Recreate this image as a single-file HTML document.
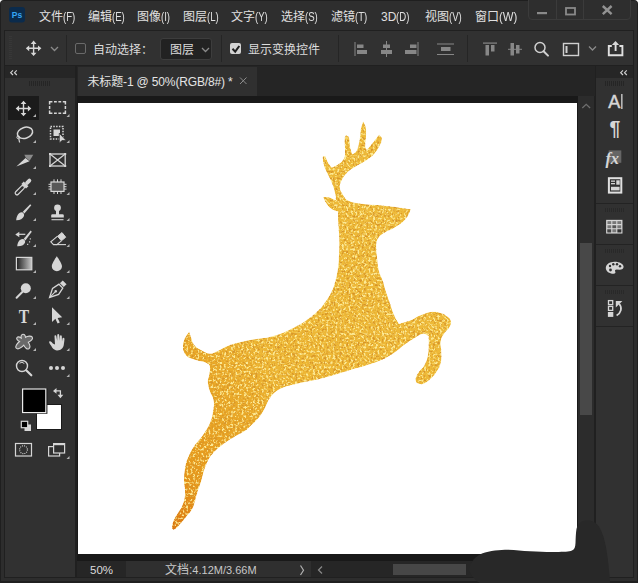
<!DOCTYPE html>
<html lang="zh-CN">
<head>
<meta charset="utf-8">
<title>Photoshop</title>
<style>
*{box-sizing:border-box;margin:0;padding:0}
html,body{width:638px;height:583px;overflow:hidden;background:#fff}
#win{left:0;top:0;width:638px;height:583px;background:#2d2d2d;border:1px solid #1f1f1f;border-bottom-width:2px;border-radius:4px 4px 0 0}
body{position:relative;font-family:"Liberation Sans","Noto Sans CJK SC",sans-serif;font-size:12px;color:#d8d8d8}
.abs{position:absolute}
#menubar{left:1px;top:1px;width:636px;height:29px;background:#2e2e2e;border-radius:3px 3px 0 0}
#frame{left:4px;top:30px;width:630px;height:548px;background:#202020}
.mi .l{display:inline-block;font-size:12px;transform:scaleX(.8);transform-origin:0 50%}
.mi{position:absolute;top:9px;height:17px;line-height:17px;font-size:12px;color:#e0e0e0;white-space:nowrap}
#optbar{left:5px;top:31px;width:628px;height:34px;background:#313131}
.vsep{position:absolute;width:1px;background:#252525;top:35px;height:27px}
.t12{position:absolute;font-size:12px;line-height:16px;color:#dcdcdc;white-space:nowrap}
#toolhdr{left:5px;top:66px;width:70px;height:12px;background:#262626}
#tools{left:5px;top:78px;width:70px;height:499px;background:#313131}
#tabbar{left:77px;top:66px;width:518px;height:29.5px;background:#252525}
#tab{left:78px;top:67px;width:179px;height:28.5px;background:#303030}
#paste{left:77px;top:95.5px;width:501px;height:465.5px;background:#191919}
#canvas{left:78px;top:103px;width:499px;height:451px;background:#fff}
#vscroll{left:577.5px;top:95.5px;width:16px;height:465.5px;background:#2c2c2c}
#vthumb{left:580px;top:243px;width:12px;height:172px;background:#484848}
#status{left:77px;top:561px;width:518px;height:16px;background:#2f2f2f}
#zoomf{left:77px;top:561px;width:49px;height:16px;background:#262626}
#hscroll{left:311px;top:561px;width:284px;height:16px;background:#262626}
#hthumb{left:393px;top:564px;width:73px;height:11px;background:#474747}
#rhdr{left:596px;top:66px;width:37px;height:12px;background:#262626}
#rpanel{left:596px;top:78px;width:37px;height:499px;background:#313131}
.rdiv{position:absolute;left:596px;width:37px;height:1px;background:#232323}
.grip{position:absolute;height:5px;background:repeating-linear-gradient(90deg,#252525 0,#252525 1px,transparent 1px,transparent 2px)}
svg{position:absolute;left:0;top:0;overflow:visible}
</style>
</head>
<body>
<div id="win" class="abs"></div>
<div id="menubar" class="abs"></div>
<div id="frame" class="abs"></div>
<div id="optbar" class="abs"></div>
<div id="toolhdr" class="abs"></div>
<div id="tools" class="abs"></div>
<div id="tabbar" class="abs"></div>
<div id="tab" class="abs"></div>
<div id="paste" class="abs"></div>
<div id="canvas" class="abs"></div>
<div id="vscroll" class="abs"></div>
<div id="vthumb" class="abs"></div>
<div id="status" class="abs"></div>
<div id="zoomf" class="abs"></div>
<div id="hscroll" class="abs"></div>
<div id="hthumb" class="abs"></div>
<div id="rhdr" class="abs"></div>
<div id="rpanel" class="abs"></div>
<div class="rdiv" style="top:203px"></div>
<div class="rdiv" style="top:244px"></div>
<div class="rdiv" style="top:285px"></div>
<div class="rdiv" style="top:326px"></div>
<div class="grip" style="left:29px;top:81px;width:21px"></div>
<div class="grip" style="left:605px;top:81px;width:19px"></div>
<div class="grip" style="left:605px;top:208px;width:19px;height:4px;opacity:.7"></div>
<div class="grip" style="left:605px;top:249px;width:19px;height:4px;opacity:.7"></div>
<div class="grip" style="left:605px;top:290px;width:19px;height:4px;opacity:.7"></div>

<!-- menu -->
<span class="mi" style="left:39px">文件<span class="l">(F)</span></span>
<span class="mi" style="left:88px">编辑<span class="l">(E)</span></span>
<span class="mi" style="left:137px">图像<span class="l">(I)</span></span>
<span class="mi" style="left:183px">图层<span class="l">(L)</span></span>
<span class="mi" style="left:231px">文字<span class="l">(Y)</span></span>
<span class="mi" style="left:281px">选择<span class="l">(S)</span></span>
<span class="mi" style="left:331px">滤镜<span class="l">(T)</span></span>
<span class="mi" style="left:381px">3D<span class="l">(D)</span></span>
<span class="mi" style="left:425px">视图<span class="l">(V)</span></span>
<span class="mi" style="left:475px">窗口<span class="l" style="transform:scaleX(.95)">(W)</span></span>

<!-- options bar -->
<div class="vsep" style="left:66px"></div>
<div class="vsep" style="left:221px"></div>
<div class="vsep" style="left:338px"></div>
<div class="vsep" style="left:467px"></div>
<div class="abs" style="left:75px;top:43px;width:11px;height:11px;border:1px solid #6a6a6a;border-radius:2px"></div>
<span class="t12" style="left:93px;top:42px">自动选择：</span>
<div class="abs" style="left:160px;top:38px;width:52px;height:22px;background:#222;border:1px solid #3d3d3d;border-radius:3px"></div>
<span class="t12" style="left:170px;top:42px">图层</span>
<div class="abs" style="left:230px;top:43px;width:11px;height:11px;background:#d2d2d2;border-radius:2px"></div>
<span class="t12" style="left:248px;top:42px">显示变换控件</span>

<!-- tab + status text -->
<span class="t12" style="left:87.5px;top:74px;color:#e4e4e4;letter-spacing:-0.15px">未标题-1 @ 50%(RGB/8#) *</span>
<span class="t12" style="left:90px;top:562px;font-size:11.5px">50%</span>
<span class="t12" style="left:165px;top:562px;font-size:12px;color:#c8c8c8">文档:<span style="font-size:11px">4.12M/3.66M</span></span>

<!-- deer + all icons -->
<svg width="638" height="583" viewBox="0 0 638 583">
<defs>
<filter id="glit" x="0" y="0" width="100%" height="100%" color-interpolation-filters="sRGB">
<feTurbulence type="fractalNoise" baseFrequency="0.45" numOctaves="2" seed="3" result="n"/>
<feColorMatrix in="n" type="matrix" values="0 0 0 0 0  0 0 0 0 0  0 0 0 0 0  5 0 0 0 -2.55" result="a"/>
<feFlood flood-color="#fce994"/><feComposite in2="a" operator="in" result="light"/>
<feColorMatrix in="n" type="matrix" values="0 0 0 0 0  0 0 0 0 0  0 0 0 0 0  0 5 0 0 -2.6" result="b"/>
<feFlood flood-color="#d7952a"/><feComposite in2="b" operator="in" result="dark"/>
<feMerge><feMergeNode in="SourceGraphic"/><feMergeNode in="dark"/><feMergeNode in="light"/></feMerge>
<feGaussianBlur stdDeviation="0.35"/>
<feComposite in2="SourceGraphic" operator="in"/>
</filter>
<linearGradient id="gold" x1="1" y1="0" x2="0" y2="1">
<stop offset="0" stop-color="#eebc3c"/><stop offset="0.62" stop-color="#edb634"/><stop offset="0.75" stop-color="#e9a727"/><stop offset="0.9" stop-color="#e6981b"/><stop offset="1" stop-color="#db7410"/>
</linearGradient>
<linearGradient id="gr" x1="0" y1="0" x2="1" y2="0"><stop offset="0" stop-color="#1e1e1e"/><stop offset="1" stop-color="#c8c8c8"/></linearGradient>
</defs>
<path id="deer" fill="url(#gold)" filter="url(#glit)" d="M363.1,121.3C363.9,123.0 365.2,124.2 365.6,126.5C366.4,130.6 366.1,132.7 366.0,136.8C365.9,140.5 365.0,142.3 365.2,146.0C365.3,147.7 366.1,148.7 366.6,150.1C368.3,148.1 369.8,146.5 371.8,144.0C374.8,140.3 376.6,137.8 379.0,134.7C380.0,135.7 381.0,136.8 382.0,137.8C381.7,139.5 381.9,141.0 381.0,142.9C379.0,147.3 377.8,149.5 374.8,153.2C372.4,156.2 370.7,157.2 367.6,159.4C363.7,162.2 361.4,163.0 357.3,165.6C353.6,168.0 351.3,168.8 348.1,171.8C345.1,174.6 343.9,176.4 341.9,180.0C340.5,182.6 339.6,184.2 339.8,187.2C340.0,190.3 341.2,191.7 342.9,194.4C344.6,197.2 345.2,199.2 348.1,200.6C353.0,203.1 356.1,202.9 361.5,203.7C368.0,204.7 371.3,204.4 377.9,205.1C385.4,205.8 389.1,206.3 396.5,207.2C402.3,207.9 406.1,208.5 410.9,209.2C409.9,211.3 409.5,213.2 408.0,215.5C406.1,218.4 405.1,220.0 402.5,222.3C399.5,225.0 397.5,225.9 394.0,227.9C389.9,230.3 387.4,230.7 383.5,233.3C381.0,235.0 379.5,236.0 378.0,238.6C376.5,241.1 376.4,242.7 376.3,245.6C376.1,250.5 376.6,253.0 377.2,257.9C377.8,263.7 377.9,266.6 379.3,272.3C380.1,275.5 381.4,276.8 382.5,280.0C384.0,284.3 384.4,286.6 385.8,291.0C387.5,296.3 388.4,298.9 390.2,304.1C391.9,309.0 392.5,311.5 394.6,316.2C396.0,319.4 397.5,321.3 399.0,323.9C402.7,322.8 405.7,322.3 410.0,320.6C414.5,318.8 416.4,316.9 420.9,315.1C425.2,313.4 427.3,312.3 431.9,311.8C435.4,311.4 437.3,311.8 440.7,312.9C444.1,314.0 445.7,315.0 448.4,317.3C450.0,318.6 450.8,319.7 451.0,321.7C451.3,324.0 450.6,325.2 449.5,327.2C447.8,330.2 445.8,330.9 444.0,333.8C442.3,336.6 441.2,338.1 440.7,341.4C440.1,345.8 441.4,348.0 441.4,352.4C441.4,356.8 441.8,359.1 440.7,363.4C439.7,367.2 438.5,368.9 436.3,372.2C434.1,375.5 432.8,377.2 429.7,379.8C427.0,382.1 425.4,383.3 422.0,384.2C419.9,384.7 418.4,383.5 416.6,383.1C416.2,381.7 415.2,380.5 415.5,378.8C416.1,375.9 417.1,374.6 418.7,372.2C420.6,369.3 422.5,368.6 424.2,365.6C426.1,362.3 426.7,360.5 427.5,356.8C428.5,352.5 428.4,350.2 428.6,345.8C428.8,341.9 428.6,339.3 428.6,336.0C426.8,335.3 425.4,333.4 423.1,333.8C419.2,334.4 417.8,336.2 414.4,338.2C410.3,340.6 408.3,341.9 404.5,344.7C400.4,347.6 398.8,349.6 394.6,352.4C389.5,355.8 386.9,357.5 381.4,360.1C375.5,362.8 372.3,363.6 366.1,365.6C360.2,367.5 357.2,368.1 351.3,369.8C346.8,371.1 344.5,371.8 340.0,373.2C335.2,374.6 332.8,375.5 328.0,376.8C322.9,378.2 320.3,378.8 315.2,380.0C310.2,381.1 307.7,381.4 302.7,382.5C298.3,383.4 296.1,383.8 291.7,385.0C287.9,386.0 285.9,386.4 282.3,388.0C279.0,389.5 277.3,390.4 274.5,392.7C272.3,394.5 271.4,395.8 269.8,398.2C268.2,400.5 267.9,402.0 266.6,404.5C265.3,407.0 264.9,408.4 263.5,410.8C261.8,413.7 260.9,415.2 258.8,417.8C256.5,420.5 255.1,421.6 252.5,424.1C250.1,426.5 249.1,428.0 246.3,430.0C241.6,433.3 238.7,434.2 233.8,437.3C228.8,440.4 226.1,441.8 221.5,445.5C217.0,449.1 214.6,451.0 211.2,455.6C207.9,460.0 207.0,462.8 205.0,467.9C202.8,473.5 202.7,476.6 200.9,482.3C199.7,486.2 198.7,488.1 197.5,492.0C196.1,496.6 195.8,499.1 194.3,503.7C193.3,506.6 192.9,508.1 191.3,510.6C189.4,513.6 188.0,514.7 185.7,517.4C183.7,519.8 182.7,521.0 180.6,523.4C178.8,525.5 178.0,526.7 175.9,528.6C175.0,529.4 174.2,529.5 173.3,529.9C172.9,529.5 172.4,529.0 172.0,528.6C172.1,527.2 172.0,526.0 172.4,524.3C173.0,521.8 173.5,520.6 174.6,518.3C175.9,515.8 176.9,514.7 178.4,512.3C180.0,509.6 181.0,508.3 182.3,505.4C183.4,502.8 183.9,501.4 184.4,498.6C185.0,495.2 185.1,493.4 185.0,490.0C184.9,486.9 184.0,485.4 184.0,482.3C184.0,476.5 184.0,473.6 185.0,467.9C185.9,462.8 186.8,460.3 188.8,455.6C190.7,451.2 192.0,449.2 194.7,445.3C197.7,441.0 199.9,439.4 202.9,435.0C206.1,430.3 207.9,427.9 210.1,422.6C212.1,417.9 212.4,415.3 213.2,410.3C213.8,406.2 214.2,404.1 213.5,400.0C212.8,396.3 210.9,394.9 209.8,391.3C208.6,387.6 207.9,385.6 207.7,381.7C207.6,378.9 208.7,377.7 209.1,374.9C209.6,371.6 210.4,369.9 209.8,366.6C209.5,364.9 208.6,364.0 207.0,363.2C203.4,361.4 201.2,361.7 197.4,360.5C193.5,359.2 191.2,359.2 187.8,357.0C185.5,355.5 184.7,354.1 183.7,351.6C182.7,349.0 183.0,347.5 183.0,344.7C183.0,343.4 183.2,342.7 183.6,341.5C184.3,339.4 184.7,338.4 185.8,336.5C187.0,334.4 188.1,333.2 189.2,331.6C189.9,333.7 190.4,335.3 191.3,337.8C192.3,340.6 192.1,342.4 194.0,344.7C196.4,347.6 198.3,348.4 201.6,350.2C204.7,351.9 206.3,353.3 209.8,353.6C212.6,353.8 214.0,352.6 216.6,351.5C221.1,349.6 223.0,347.8 227.6,346.0C231.9,344.3 234.2,343.8 238.6,342.6C243.1,341.4 245.4,340.9 250.0,340.0C258.6,338.4 263.0,338.6 271.5,336.5C278.3,334.8 281.6,333.4 288.0,330.5C294.8,327.4 298.2,325.7 304.5,321.6C310.4,317.7 313.1,315.5 318.2,310.6C321.7,307.3 323.0,305.1 325.7,301.2C328.4,297.3 329.9,295.3 331.9,290.9C334.1,286.1 334.7,283.6 336.0,278.5C337.2,273.7 337.5,271.2 338.1,266.2C338.8,260.5 338.9,257.6 339.1,251.8C339.3,245.2 339.3,241.9 339.1,235.3C338.9,229.5 338.3,226.7 338.1,220.9C337.9,217.2 338.1,214.7 338.1,211.6C335.7,210.6 333.4,210.4 330.9,208.5C328.3,206.6 327.5,205.0 325.7,202.4C324.4,200.5 324.0,198.9 323.1,197.2C325.0,197.2 326.6,196.7 328.8,197.2C331.7,197.9 333.4,199.3 335.7,200.3C335.7,199.0 335.9,198.0 335.7,196.5C335.1,193.1 334.7,191.5 333.7,188.2C332.7,184.8 332.0,183.2 330.6,180.0C329.1,176.6 328.0,175.2 326.5,171.8C325.1,168.6 324.2,166.9 323.4,163.5C322.7,160.7 323.0,158.7 322.8,156.3C323.7,156.3 324.5,156.3 325.4,156.3C326.4,158.7 327.0,160.8 328.5,163.5C329.5,165.3 330.6,166.2 331.6,167.6C333.7,166.6 335.6,166.2 337.8,164.5C340.6,162.4 342.5,161.6 344.0,158.4C345.6,155.0 344.9,152.8 345.0,149.1C345.1,145.0 344.3,142.9 344.6,138.8C344.7,137.2 345.5,136.3 346.0,135.1C347.0,136.0 348.6,136.2 349.1,137.8C350.3,141.3 349.4,143.4 350.1,147.0C350.7,150.0 351.5,151.9 352.2,154.3C353.6,153.3 355.3,153.0 356.3,151.2C358.3,147.4 358.5,145.1 359.4,140.9C360.4,136.0 360.1,133.4 361.0,128.5C361.6,125.6 362.4,123.7 363.1,121.3Z"/>
<!-- PS logo -->
<rect x="9" y="7" width="16" height="15.5" rx="3" fill="#0b2b4c"/>
<text x="17" y="18.3" font-family="'Liberation Sans',sans-serif" font-weight="bold" font-size="8.5" fill="#35a5f5" text-anchor="middle">Ps</text>
<!-- window controls -->
<path d="M528.5,0 V16 Q528.5,19.5 532,19.5 H627 Q630.5,19.5 630.5,16 V0" fill="#2e2e2e" stroke="#3b3b3b" stroke-width="1"/>
<path d="M556.5,0V19 M583.5,0V19" stroke="#3b3b3b" stroke-width="1"/>
<rect x="537" y="12" width="10" height="2.2" fill="#8a8a8a"/>
<rect x="566" y="8" width="9" height="6.5" fill="none" stroke="#8a8a8a" stroke-width="1.8"/>
<path d="M602.8,6 L611.6,14.2 M611.6,6 L602.8,14.2" stroke="#929292" stroke-width="2.4" fill="none"/>
<!-- option bar: gripper -->
<path d="M10.5,36V60" stroke="#3a3a3a" stroke-width="3" stroke-dasharray="1 1" opacity="0.7"/>
<!-- move icon symbol -->
<defs>
<g id="mv"><path d="M-5.5,0H5.5M0,-5.5V5.5" stroke="#d8d8d8" stroke-width="1.4" fill="none"/><path d="M0,-7.8 L2.9,-4.4 H-2.9Z M0,7.8 L2.9,4.4 H-2.9Z M-7.8,0 L-4.4,-2.9 V2.9Z M7.8,0 L4.4,-2.9 V2.9Z" fill="#d8d8d8"/></g>
<path id="tri" d="M3,0V3H0Z" fill="#b4b4b4"/>
<path id="chev" d="M0,0 L3.5,3.5 L7,0" fill="none" stroke="#8a8a8a" stroke-width="1.3"/>
</defs>
<use href="#mv" x="33.6" y="48.3"/>
<use href="#chev" x="51" y="47"/>
<use href="#chev" x="202" y="48"/>
<path d="M232.5,48.8 L235.2,51.6 L239.3,46" fill="none" stroke="#1e1e1e" stroke-width="2"/>
<!-- align icons (disabled) -->
<g fill="#878787">
<rect x="354.5" y="42" width="1" height="14"/><rect x="357" y="44.5" width="6.5" height="3.5"/><rect x="357" y="50" width="10" height="4"/>
<rect x="386" y="41" width="1" height="16"/><rect x="383" y="44.5" width="7" height="3.5"/><rect x="381" y="50" width="11" height="4"/>
<rect x="417.5" y="42" width="1" height="14"/><rect x="410" y="44.5" width="6.5" height="3.5"/><rect x="405" y="50" width="11.5" height="4"/>
<rect x="437" y="43.5" width="17" height="1"/><rect x="437" y="54" width="17" height="1"/><rect x="441" y="47" width="9.5" height="4"/>
<rect x="483" y="42.5" width="14" height="1.2"/><rect x="485.5" y="45" width="3.5" height="10.5"/><rect x="491" y="45" width="3.5" height="6.5"/>
<rect x="508" y="48.8" width="14" height="1"/><rect x="510.5" y="43" width="3.5" height="12.5"/><rect x="516" y="45" width="3.5" height="8.5"/>
</g>
<!-- search -->
<circle cx="540" cy="47.5" r="5" fill="none" stroke="#d0d0d0" stroke-width="1.5"/>
<path d="M543.6,51.2 L548,55.6" stroke="#d0d0d0" stroke-width="2" stroke-linecap="round"/>
<!-- workspace -->
<rect x="563.5" y="43.5" width="15" height="12" fill="none" stroke="#d0d0d0" stroke-width="1.4"/>
<rect x="565.5" y="46" width="2" height="7" fill="#d0d0d0"/>
<use href="#chev" x="589" y="46.5"/>
<!-- share -->
<path d="M611.8,46 H608.8 V55.3 H622.4 V46 H619.4" fill="none" stroke="#e0e0e0" stroke-width="1.9"/>
<path d="M615.6,51 V43" stroke="#e0e0e0" stroke-width="1.9"/>
<path d="M611.8,45 L615.5,41 L619.2,45Z" fill="#d8d8d8"/>
<!-- panel collapse arrows -->
<path d="M13,70.4 L10.7,72.7 L13,75 M16.8,70.4 L14.5,72.7 L16.8,75" fill="none" stroke="#d0d0d0" stroke-width="1.2"/>
<path d="M623,70.4 L620.7,72.7 L623,75 M626.8,70.4 L624.5,72.7 L626.8,75" fill="none" stroke="#d0d0d0" stroke-width="1.2"/>
<!-- tab close -->
<path d="M240,77.5 L246.5,84 M246.5,77.5 L240,84" stroke="#8c8c8c" stroke-width="1" fill="none"/>
<!-- scroll arrow / status arrow -->
<path d="M582.3,108 L586.2,104.3 L590.1,108" fill="none" stroke="#6e6e6e" stroke-width="1.3"/>
<path d="M322,566.5 L318.5,570 L322,573.5" fill="none" stroke="#8a8a8a" stroke-width="1.2"/>
<path d="M300.5,565.5 L303.5,570.3 L300.5,575" fill="none" stroke="#b0b0b0" stroke-width="1.2"/>
<!-- selected tool bg -->
<rect x="8" y="96" width="31" height="24" fill="#1b1b1b"/>
<g fill="none" stroke="#d6d6d6" stroke-width="1.4">
<!-- row1 -->
<use href="#mv" x="23.5" y="108.5" stroke="none"/>
<path d="M49.6,104.4 V101.7 H52.4 M54,101.7 H56.8 M58.4,101.7 H61.2 M62.8,101.7 H65.4 V104.4 M65.4,106 V109 M65.4,110.6 V113.3 H62.8 M61.2,113.3 H58.4 M56.8,113.3 H54 M52.4,113.3 H49.6 V110.6 M49.6,109 V106" stroke-width="1.5"/>
<!-- row2 lasso -->
<ellipse cx="25" cy="132.8" rx="7.8" ry="5.4" transform="rotate(-18 25 132.8)" stroke-width="1.5"/>
<circle cx="18.3" cy="137.3" r="1.4" stroke-width="1"/>
<path d="M18.8,138.6 L19.6,142.5" stroke-width="1.2"/>
<!-- object select -->
<rect x="50.5" y="126.5" width="12.5" height="12.5" stroke-dasharray="1.5 1.3" stroke-width="1.5"/>
<rect x="53.5" y="129.5" width="6.5" height="6.5" fill="#d6d6d6" stroke="none"/>
<path d="M59.3,133.2 V143.2 L61.9,140.6 H66.2Z" fill="#d6d6d6" stroke="#303030" stroke-width="0.8"/>
<!-- row3 slice -->
<path d="M16.4,166.6 L25.5,158 L29.5,161.2Z" fill="#d6d6d6" stroke="none"/>
<path d="M24.3,154.7 H33.3 L29.6,160.8 L25.8,157.7Z" fill="#8a8a8a" stroke="none"/>
<!-- frame -->
<rect x="50" y="154" width="15.2" height="12" stroke-width="1.3"/>
<path d="M50,154 L65.2,166 M65.2,154 L50,166" stroke-width="1.2"/>
<rect x="49" y="153" width="2" height="2" fill="#d6d6d6" stroke="none"/><rect x="64.2" y="153" width="2" height="2" fill="#d6d6d6" stroke="none"/><rect x="49" y="165" width="2" height="2" fill="#d6d6d6" stroke="none"/><rect x="64.2" y="165" width="2" height="2" fill="#d6d6d6" stroke="none"/>
<!-- row4 eyedropper -->
<g transform="rotate(45 23.5 186.5)">
<rect x="21.7" y="186" width="3.6" height="11.5" rx="1.8" stroke-width="1.2"/>
<rect x="20.2" y="182.8" width="6.6" height="3.4" fill="#d6d6d6" stroke="none"/>
<rect x="21.6" y="176.3" width="3.8" height="7" rx="1.9" fill="#d6d6d6" stroke="none"/>
</g>
<!-- chip -->
<rect x="51" y="182" width="13" height="9.4" fill="#585858" stroke-width="1.2"/>
<path d="M54,179.3V182 M57.5,179.3V182 M61,179.3V182 M54,191.4V194 M57.5,191.4V194 M61,191.4V194 M48.5,184.3H51 M48.5,186.7H51 M48.5,189.1H51 M64,184.3H66.5 M64,186.7H66.5 M64,189.1H66.5" stroke-width="1"/>
<!-- row5 brush -->
<path d="M22.8,211.8 L30.2,204.2 L31.3,205.3 L24.4,213.4Z" fill="#d6d6d6" stroke="none"/>
<path d="M16.2,220.3 C16.5,216 18.5,212.5 21.5,212.3 C23.5,212.3 24.6,214.3 24,216 C23,219 19.5,220.5 16.2,220.3Z" fill="#d6d6d6" stroke="none"/>
<!-- stamp -->
<circle cx="57.5" cy="207.8" r="3.4" fill="#d6d6d6" stroke="none"/>
<rect x="56" y="210" width="3" height="5" fill="#d6d6d6" stroke="none"/>
<path d="M51.2,217.6 V215.6 Q51.2,214.3 52.5,214.3 H62.5 Q63.8,214.3 63.8,215.6 V217.6Z" fill="#d6d6d6" stroke="none"/>
<path d="M51.5,219.7 H63.5" stroke-width="1.1"/>
<!-- row6 history brush -->
<path d="M23.8,238.8 L30.6,230.6 L31.8,231.7 L25.4,240.4Z" fill="#d6d6d6" stroke="none"/>
<path d="M17.2,246.3 C17.5,242.5 19.5,239.3 22.5,239.1 C24.5,239.1 25.6,241.1 25,242.8 C24,245.5 20.5,246.5 17.2,246.3Z" fill="#d6d6d6" stroke="none"/>
<path d="M18.5,234.3 H25.3" stroke-width="1.2"/>
<path d="M15.3,234.5 L19.3,231.8 V237.2Z" fill="#d6d6d6" stroke="none"/>
<path d="M30.3,238.3v1.2 M29.6,241.2v1.2 M27.7,243.7v1.2" stroke-width="1.1"/>
<!-- eraser -->
<path d="M57.6,236.2 L62,232.6 L65.7,237.2 L61.4,240.8Z" fill="#d6d6d6" stroke-width="1"/>
<path d="M57.6,236.2 L50.8,241.8 L53.5,244.6 H56.8 L61.4,240.8" stroke-width="1.1"/>
<path d="M56.5,244.6 H66" stroke-width="1.1"/>
<!-- row7 gradient -->
<rect x="16.4" y="257.4" width="15.4" height="12.4" fill="url(#gr)" stroke-width="1.2"/>
<!-- drop -->
<path d="M56.8,256.3 C56.8,256.3 51.8,263.3 51.8,266.3 A5.1,5 0 0 0 62,266.3 C62,263.3 56.8,256.3 56.8,256.3Z" fill="#d6d6d6" stroke="none"/>
<!-- row8 dodge -->
<circle cx="25.8" cy="288.3" r="5" fill="#d6d6d6" stroke="none"/>
<path d="M22.3,292 L16.6,297.7" stroke-width="2" stroke-linecap="round"/>
<!-- pen -->
<g transform="rotate(45 57 290)">
<rect x="54.3" y="279.2" width="5.4" height="4" fill="#d6d6d6" stroke="none"/>
<path d="M54.3,284.5 H59.7 L61.3,292 L57,300.5 L52.7,292Z" stroke-width="1.3"/>
<path d="M57,300 V293" stroke-width="1"/>
<circle cx="57" cy="291.8" r="1.3" fill="#d6d6d6" stroke="none"/>
</g>
<!-- row9 T -->
<text transform="translate(24,322.6) scale(0.82,1)" font-family="'Liberation Serif',serif" font-weight="bold" font-size="19" fill="#d6d6d6" stroke="none" text-anchor="middle">T</text>
<!-- path select arrow -->
<path d="M52,307.3 V322 L55.4,318.8 L57.6,323.6 L59.8,322.6 L57.6,317.9 L62.2,317.3Z" fill="#d6d6d6" stroke="none"/>
<!-- row10 blob -->
<path d="M22,334.6 C24,333.6 25.3,335 25.5,337.3 C27.5,336 31,335.5 32.3,337.2 C33.3,339 31,341 28.3,342.3 C29.8,344.5 30.5,347.5 28.8,348.8 C27,349.8 25,347.5 23.8,345.2 C21.5,347.5 18,349.8 16.2,348.2 C14.8,346.5 17,343.5 19.5,341.5 C17.5,340.5 16,338.8 17,337.5 C18,336.3 19.8,337 21.2,338 C20.8,336.5 21,335.2 22,334.6Z" fill="#6a6a6a" stroke-width="1.1"/>
<!-- hand -->
<path d="M52.8,343.6 C52,342 50.3,340.6 49.3,341.5 C48.6,342.3 50,344 51,345.6 C52.3,347.8 53.6,350.2 57,350.4 C61,350.5 63.3,348.3 63.8,344.8 C64.1,342.6 64.6,340 64.4,338.6 C64.2,337.4 62.8,337.4 62.5,338.6 L62,341.4 L61.8,336.2 C61.7,334.9 60,334.9 59.9,336.2 L59.7,340.8 L59.2,334.9 C59.1,333.6 57.3,333.6 57.3,334.9 L57.2,340.8 L56.3,336 C56.1,334.8 54.4,335 54.5,336.3 L55,344.6Z" fill="#d6d6d6" stroke="none"/>
<!-- row11 zoom -->
<circle cx="22" cy="366" r="5.5" stroke-width="1.4"/>
<path d="M19.5,363.2 A3.6,3.6 0 0 1 24.3,363.5" stroke-width="1"/>
<path d="M26.2,370.3 L31.3,375.3" stroke-width="2.2" stroke-linecap="round"/>
<circle cx="51" cy="368" r="2" fill="#d6d6d6" stroke="none"/><circle cx="57" cy="368" r="2" fill="#d6d6d6" stroke="none"/><circle cx="63" cy="368" r="2" fill="#d6d6d6" stroke="none"/>
<!-- swap arrows -->
<path d="M55.5,390.9 H60.4 V395.5" stroke-width="1.3"/>
<path d="M53,390.9 L56.5,388 V393.8Z M60.4,398.3 L57.5,394.8 H63.3Z" fill="#d6d6d6" stroke="none"/>
<!-- default colors -->
<rect x="24.5" y="424.5" width="6.5" height="6.5" fill="#d6d6d6" stroke="none"/>
<rect x="21.3" y="421.3" width="6.4" height="6.4" fill="#000" stroke-width="1.2"/>
<!-- quick mask -->
<rect x="15.5" y="443.5" width="16" height="12.5" stroke-width="1.2"/>
<circle cx="23.5" cy="449.7" r="3.9" stroke-dasharray="1 1.05" stroke-width="1.1"/>
<!-- screen mode -->
<rect x="48.6" y="446.6" width="11" height="9.4" stroke-width="1.2"/>
<rect x="53.6" y="443.6" width="11" height="9.4" fill="#303030" stroke-width="1.2"/>
<path d="M53.6,444.2H64.6" stroke-width="2"/>
</g>
<!-- swatches -->
<rect x="36.5" y="404.5" width="25" height="25" fill="#fff" stroke="#1a1a1a" stroke-width="1"/>
<rect x="22" y="388.4" width="25.4" height="25.4" fill="#161616"/>
<rect x="22.6" y="389" width="23.2" height="23.6" fill="#000" stroke="#ececec" stroke-width="1.2"/>
<!-- corner triangles -->
<g>
<use href="#tri" x="33" y="114"/><use href="#tri" x="66.5" y="114"/>
<use href="#tri" x="33" y="140"/><use href="#tri" x="66.5" y="140"/>
<use href="#tri" x="33" y="166"/>
<use href="#tri" x="33" y="192"/><use href="#tri" x="66.5" y="192"/>
<use href="#tri" x="33" y="218"/><use href="#tri" x="66.5" y="218"/>
<use href="#tri" x="33" y="244"/><use href="#tri" x="66.5" y="244"/>
<use href="#tri" x="33" y="270"/><use href="#tri" x="66.5" y="270"/>
<use href="#tri" x="33" y="296"/><use href="#tri" x="66.5" y="296"/>
<use href="#tri" x="33" y="322"/><use href="#tri" x="66.5" y="322"/>
<use href="#tri" x="33" y="348"/><use href="#tri" x="66.5" y="348"/>
<use href="#tri" x="66.5" y="374"/>
<use href="#tri" x="66.5" y="456"/>
</g>
<g fill="#d6d6d6">
<text x="608.3" y="108" font-family="'Liberation Sans',sans-serif" font-size="18" stroke="#d6d6d6" stroke-width="0.5">A</text>
<rect x="621.2" y="94" width="1.3" height="15"/>
<text x="615" y="135" font-family="'Liberation Sans',sans-serif" font-weight="bold" font-size="19.5" text-anchor="middle">¶</text>
<rect x="608.7" y="150.4" width="12.6" height="12.4" fill="#666"/>
<text x="605.6" y="164.2" font-family="'Liberation Serif',serif" font-style="italic" font-weight="bold" font-size="16.5" letter-spacing="-0.3">fx</text>
<!-- properties panel icon -->
<rect x="608.9" y="178.2" width="12.4" height="14.4" fill="none" stroke="#e0e0e0" stroke-width="2"/>
<rect x="611" y="180.5" width="4" height="1.3"/><rect x="611" y="183" width="4" height="1.3"/>
<rect x="616.3" y="180.3" width="3.4" height="4.4"/>
<rect x="611" y="186.8" width="8.6" height="3.6"/>
<!-- grid -->
<rect x="606.8" y="220.5" width="15" height="12.4" fill="#777" stroke="#d6d6d6" stroke-width="1.3"/>
<rect x="612" y="225" width="4.6" height="3.6" fill="#555"/><rect x="617" y="229" width="4.3" height="3.4" fill="#333"/><rect x="607.4" y="229" width="4.3" height="3.4" fill="#444"/>
<path d="M611.8,220.5V233 M616.8,220.5V233 M606.8,224.6H621.8 M606.8,228.8H621.8" stroke="#d6d6d6" stroke-width="1.1" fill="none"/>
<!-- palette -->
<path d="M614.5,261.8 C609.5,261.8 605.8,264.6 605.8,268 C605.8,271.3 609.3,273.8 613.5,273.8 C615.5,273.8 615.8,272.6 615.2,271.6 C614.6,270.5 615.3,269.6 616.8,269.6 L619.5,269.7 C622,269.7 623.6,268.6 623.6,266.8 C623.6,264 619.6,261.8 614.5,261.8Z"/>
<g fill="#303030"><circle cx="610" cy="266" r="1.2"/><circle cx="613.3" cy="264.3" r="1.2"/><circle cx="617" cy="264.3" r="1.2"/><circle cx="620" cy="266.3" r="1.2"/><circle cx="610.5" cy="270" r="1.4"/></g>
<!-- history -->
<rect x="608.5" y="300.6" width="4.2" height="4" fill="none" stroke="#d6d6d6" stroke-width="1.3"/>
<rect x="608.5" y="306.4" width="4.2" height="4" fill="none" stroke="#d6d6d6" stroke-width="1.3"/>
<rect x="607.9" y="312" width="5.4" height="4.9"/>
<path d="M619.2,303.8 C622.6,308 621,313 616.6,315.6" fill="none" stroke="#d6d6d6" stroke-width="1.7"/>
<path d="M615.8,300.9 H622.4 L615.8,307.4Z"/>
</g>

<!-- watermark blob -->
<path fill="#282828" d="M480,583 C476,581 472,577 469.5,571.5 C468.5,568 470,565 472,562 C474,558 477,556 482,553.5 C490,550.5 500,549.7 508,549.7 C516,549.7 522,551 530,551.3 C540,551.8 548,552.2 556,552 C564,551.8 569,551.8 572,550.5 C574.5,549.5 575.3,547 575.5,543 C575.7,538 575.8,533 576.5,529 C577.5,524.5 580.5,521 586,520.2 C591,519.7 596,522 599,526.5 C603,533 605,541 606.5,550 C608,560 609.5,572 610,583 Z"/>
</svg>
</body>
</html>
